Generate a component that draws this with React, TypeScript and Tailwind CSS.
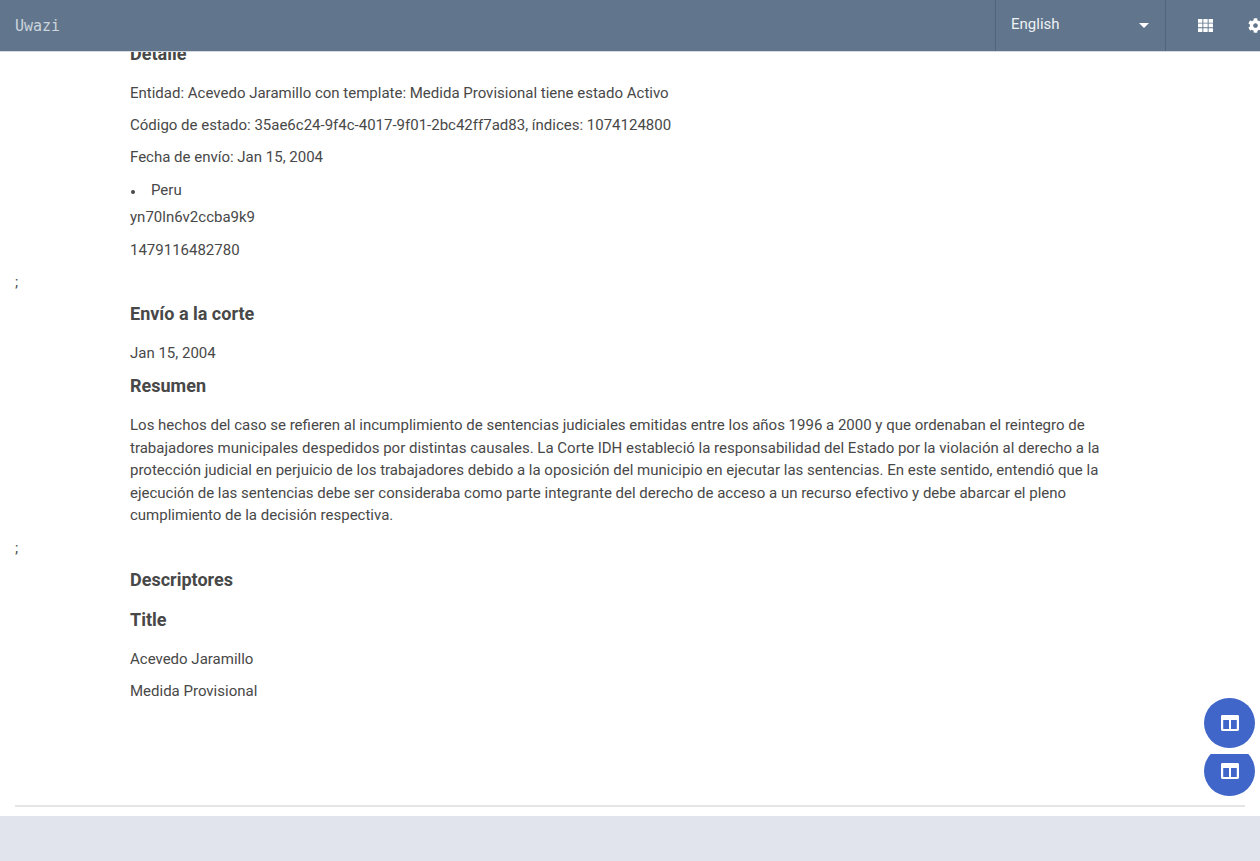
import React from "react";

function ColumnsIcon() {
  return (
    <svg viewBox="0 0 18 16" className="h-4 w-[18px]" fill="currentColor" aria-hidden="true">
      <path fillRule="evenodd" d="M1.4 0h15.2Q18 0 18 1.4v13.2Q18 16 16.6 16H1.4Q0 16 0 14.6V1.4Q0 0 1.400 0ZM2.200 5v9H8V5ZM10 5v9h5.800V5Z" />
    </svg>
  );
}

export default function App() {
  return (
    <div className="flex h-screen flex-col overflow-hidden bg-[#e1e4ed] pb-[45px] font-[Roboto,sans-serif] text-[15px] text-[#484848]">
      <header className="z-10 flex h-[51px] shrink-0 items-stretch overflow-hidden bg-[#61758c] text-white shadow-[0_1px_0_#d5dae0]">
        <a href="#" className="flex flex-1 items-center pt-0.5 pl-[15px] font-['DejaVu_Sans_Mono',monospace] text-[15px] font-light text-[#ccd4dc]">Uwazi</a>
        <div className="grid w-[171px] shrink-0 items-center border-x border-[#52637a]">
          <select aria-label="Language" className="col-start-1 row-start-1 h-full w-full appearance-none bg-transparent pr-8 pb-0.5 pl-[15px] text-[#eef1f4]">
            <option>English</option>
          </select>
          <svg viewBox="0 0 10 5" className="pointer-events-none col-start-1 row-start-1 mr-4 h-[5px] w-[10px] justify-self-end" fill="currentColor" aria-hidden="true"><path d="M0 0h10L5 5Z" /></svg>
        </div>
        <nav className="flex w-[94px] shrink-0 items-center gap-[35px] overflow-hidden pl-8">
          <button aria-label="Library" className="shrink-0">
            <svg viewBox="0 0 15 13" className="h-[13px] w-[15px]" fill="currentColor" aria-hidden="true">
              <path d="M0 0h4.400v3.700H0zM5.300 0h4.400v3.700H5.300zM10.600 0H15v3.700h-4.400zM0 4.600h4.400v3.700H0zM5.300 4.600h4.400v3.700H5.300zM10.600 4.600H15v3.700h-4.400zM0 9.200h4.400v3.700H0zM5.300 9.200h4.400v3.700H5.300zM10.600 9.200H15v3.700h-4.400z" />
            </svg>
          </button>
          <button aria-label="Settings" className="shrink-0">
            <svg viewBox="0 0 512 512" className="size-[15px]" fill="currentColor" aria-hidden="true">
              <path d="M487.4 315.7l-42.6-24.6c4.300-23.200 4.300-47 0-70.200l42.600-24.600c4.900-2.800 7.100-8.600 5.500-14-11.100-35.600-30-67.800-54.700-94.600-3.800-4.100-10-5.100-14.800-2.300L380.800 110c-17.900-15.400-38.500-27.300-60.800-35.100V25.800c0-5.600-3.900-10.500-9.400-11.700-36.700-8.200-74.300-7.800-109.200 0-5.500 1.200-9.400 6.100-9.400 11.700V75c-22.200 7.900-42.800 19.800-60.800 35.100L88.700 85.500c-4.900-2.800-11-1.900-14.800 2.300-24.700 26.700-43.600 58.900-54.700 94.600-1.700 5.400.6 11.200 5.500 14L67.300 221c-4.300 23.200-4.300 47 0 70.200l-42.600 24.600c-4.900 2.800-7.100 8.600-5.500 14 11.100 35.600 30 67.800 54.700 94.600 3.800 4.100 10 5.100 14.800 2.300l42.600-24.600c17.900 15.400 38.500 27.300 60.800 35.100v49.200c0 5.600 3.900 10.500 9.400 11.700 36.700 8.200 74.300 7.800 109.200 0 5.500-1.200 9.400-6.100 9.400-11.700v-49.200c22.200-7.900 42.800-19.800 60.800-35.100l42.600 24.600c4.900 2.800 11 1.900 14.800-2.300 24.700-26.700 43.600-58.900 54.700-94.600 1.500-5.500-.7-11.300-5.600-14.100zM256 336c-44.100 0-80-35.900-80-80s35.900-80 80-80 80 35.900 80 80-35.900 80-80 80z" />
            </svg>
          </button>
        </nav>
      </header>

      <main className="relative min-h-0 flex-1 overflow-hidden bg-white px-[15px]">
        <article className="px-[115px] leading-[22px]">
          <h3 className="-mt-2 text-lg leading-[22px] font-bold">Detalle</h3>
          <p className="mt-[17px]">Entidad: Acevedo Jaramillo con template: Medida Provisional tiene estado Activo</p>
          <p className="mt-[10px]">Código de estado: 35ae6c24-9f4c-4017-9f01-2bc42ff7ad83, índices: 1074124800</p>
          <p className="mt-[10px]">Fecha de envío: Jan 15, 2004</p>
          <ul className="mt-[11px]"><li className="flex items-center gap-4"><span className="mt-[3px] ml-px size-1 rounded-full bg-[#484848]" />Peru</li></ul>
          <p className="mt-[5px]">yn70ln6v2ccba9k9</p>
          <p className="mt-[11px]">1479116482780</p>
        </article>
        <p className="mt-[10px] leading-[22px]">;</p>
        <article className="px-[115px] leading-[22px]">
          <h3 className="mt-[10px] text-lg leading-[22px] font-bold">Envío a la corte</h3>
          <p className="mt-[17px]">Jan 15, 2004</p>
          <h3 className="mt-[11px] text-lg leading-[22px] font-bold">Resumen</h3>
          <p className="mt-[17px] leading-normal">Los hechos del caso se refieren al incumplimiento de sentencias judiciales emitidas entre los años 1996 a 2000 y que ordenaban el reintegro de trabajadores municipales despedidos por distintas causales. La Corte IDH estableció la responsabilidad del Estado por la violación al derecho a la protección judicial en perjuicio de los trabajadores debido a la oposición del municipio en ejecutar las sentencias. En este sentido, entendió que la ejecución de las sentencias debe ser consideraba como parte integrante del derecho de acceso a un recurso efectivo y debe abarcar el pleno cumplimiento de la decisión respectiva.</p>
        </article>
        <p className="mt-[10px] leading-[22px]">;</p>
        <article className="px-[115px] leading-[22px]">
          <h3 className="mt-[10px] text-lg leading-[22px] font-bold">Descriptores</h3>
          <h3 className="mt-[18px] text-lg leading-[22px] font-bold">Title</h3>
          <p className="mt-[17px]">Acevedo Jaramillo</p>
          <p className="mt-[10px]">Medida Provisional</p>
        </article>
        <hr className="mt-[103px] border-t-2 border-[#e5e5e5]" />
        <div className="absolute right-[5px] bottom-[20px] flex flex-col gap-[6px] text-white">
          <button aria-label="Show panel" className="flex h-[50px] w-[51px] items-center justify-center rounded-full bg-[#3f66c8]"><ColumnsIcon /></button>
          <div className="flex h-[42px] items-end overflow-hidden">
            <button aria-label="Show side panel" className="flex h-[50px] w-[51px] shrink-0 items-center justify-center rounded-full bg-[#3f66c8]"><ColumnsIcon /></button>
          </div>
        </div>
      </main>
    </div>
  );
}
